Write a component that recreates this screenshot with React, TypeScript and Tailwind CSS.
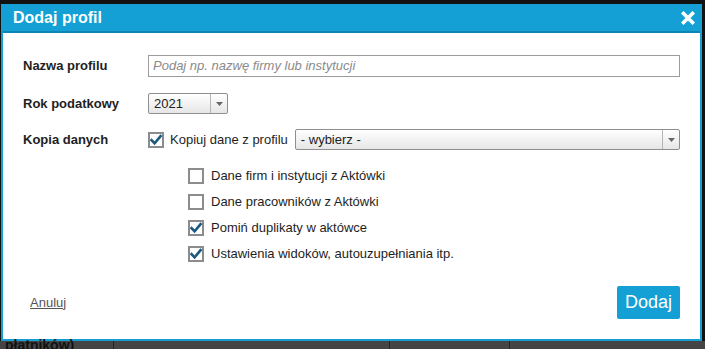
import React from "react";

const CheckBox = ({ checked }: { checked: boolean }) => (
  <svg width="16" height="16" viewBox="0 0 16 16" className="shrink-0">
    <rect x="1" y="1" width="14" height="14" fill="#fff" stroke="#8c8c8c" strokeWidth="2" />
    {checked && (
      <path d="M3.6 8.2 L6.6 11.4 L12.6 4.2" fill="none" stroke="#1b5a80" strokeWidth="2.6" strokeLinecap="square" />
    )}
  </svg>
);

const Select = ({ value, className }: { value: string; className: string }) => (
  <div
    className={`flex h-[21px] items-stretch rounded-[2px] border border-[#8f8f8f] bg-gradient-to-b from-white to-[#e6e6e6] text-[13px] text-[#222] ${className}`}
  >
    <span className="flex flex-1 items-center pl-[5px]">{value}</span>
    <span className="flex w-[17px] items-center justify-center border-l border-[#b5b5b5]">
      <svg width="7" height="4" viewBox="0 0 7 4">
        <path d="M0 0 H7 L3.5 4 Z" fill="#666" />
      </svg>
    </span>
  </div>
);

const subOptions = [
  { label: "Dane firm i instytucji z Aktówki", checked: false },
  { label: "Dane pracowników z Aktówki", checked: false },
  { label: "Pomiń duplikaty w aktówce", checked: true },
  { label: "Ustawienia widoków, autouzupełniania itp.", checked: true },
];

export default function App() {
  return (
    <div className="flex h-[349px] w-[705px] flex-col overflow-hidden bg-[#121212] font-['Liberation_Sans',Arial,sans-serif]">
      {/* okno dialogu */}
      <div className="ml-px mr-[3px] mt-1 flex h-[337px] flex-col border-x-2 border-b-2 border-[#159fd3]">
        <div className="flex h-[29px] shrink-0 items-center justify-between border-b-2 border-[#0e86b4] bg-[#14a0d4] pl-[10px] pr-[5px]">
          <span className="text-[16px] font-bold text-white">Dodaj profil</span>
          <svg width="14" height="14" viewBox="0 0 14 14">
            <path d="M2.5 2.5 L11.5 11.5 M11.5 2.5 L2.5 11.5" stroke="#fff" strokeWidth="3.6" strokeLinecap="square" />
          </svg>
        </div>

        <div className="flex flex-1 flex-col bg-white pl-[20px] pr-[20px] text-[13px] text-[#1e1e1e]">
          {/* Nazwa profilu */}
          <div className="mt-[22px] flex h-[22px] items-center">
            <span className="w-[125px] font-bold">Nazwa profilu</span>
            <div className="flex h-[22px] flex-1 items-center border border-[#9c9c9c] pl-[4px] italic text-[#8a8a8a]">
              Podaj np. nazwę firmy lub instytucji
            </div>
          </div>

          {/* Rok podatkowy */}
          <div className="mt-[16px] flex h-[21px] items-center">
            <span className="w-[125px] font-bold">Rok podatkowy</span>
            <Select value="2021" className="w-[80px]" />
          </div>

          {/* Kopia danych */}
          <div className="mt-[15px] flex h-[21px] items-center">
            <span className="w-[125px] font-bold">Kopia danych</span>
            <CheckBox checked />
            <span className="ml-[6px] mr-[7px]">Kopiuj dane z profilu</span>
            <Select value="- wybierz -" className="flex-1" />
          </div>

          <div className="ml-[165px] mt-[18px] flex flex-col gap-[10px]">
            {subOptions.map((o) => (
              <div key={o.label} className="flex h-4 items-center">
                <CheckBox checked={o.checked} />
                <span className="ml-[7px]">{o.label}</span>
              </div>
            ))}
          </div>

          <div className="mt-[24px] flex items-center justify-between">
            <a className="ml-[7px] text-[13px] text-[#555] underline">Anuluj</a>
            <button className="h-[33px] w-[63px] rounded-[2px] bg-[#14a0d4] text-[18px] text-white">Dodaj</button>
          </div>
        </div>
      </div>

      {/* tło strony pod oknem */}
      <div className="relative flex-1 bg-[#454545]">
        <span className="absolute left-[5px] top-0 text-[14px] font-bold leading-[8px] text-[#111]">płatników)</span>
        <span className="absolute left-[113px] top-0 h-full w-px bg-[#222]" />
        <span className="absolute left-[389px] top-0 h-full w-px bg-[#222]" />
        <span className="absolute left-[509px] top-0 h-full w-px bg-[#222]" />
      </div>
    </div>
  );
}
